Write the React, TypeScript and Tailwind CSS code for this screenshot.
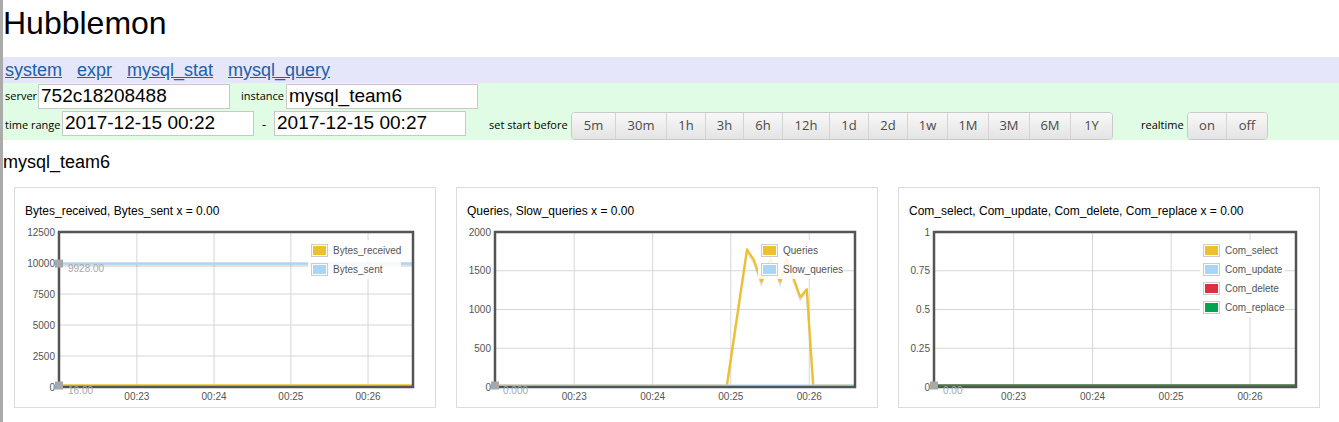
import React from "react";

type Pt = [number, number];
type Series = { name: string; color: string; points: Pt[] };
type Marker = { v: number; label: string; dx: number };

type ChartProps = {
  id: string;
  title: string;
  max: number;
  ticks: string[];
  plotLeft: number;
  plotRight: number;
  legendX: number;
  series: Series[];
  markers: Marker[];
};

const TOP = 14;
const BOTTOM = 169;
const TIMES: [string, number][] = [
  ["00:23", 0.22],
  ["00:24", 0.438],
  ["00:25", 0.655],
  ["00:26", 0.873],
];

const YELLOW = "#f0c02a";
const BLUE = "#a9d6f7";
const RED = "#dc3040";
const GREEN = "#00a64f";

function Chart({ id, title, max, ticks, plotLeft, plotRight, legendX, series, markers }: ChartProps) {
  const w = plotRight - plotLeft;
  const xOf = (f: number) => plotLeft + f * w;
  const yOf = (v: number) => BOTTOM - 1.5 - (v / max) * (BOTTOM - 1.5 - TOP);
  const step = (BOTTOM - TOP) / (ticks.length - 1);
  const line = (pts: Pt[], dy = 0) => pts.map(([f, v]) => `${xOf(f)},${yOf(v) + dy}`).join(" ");

  return (
    <div className="w-[422px] border border-[#dcdcdc] bg-white">
      <div className="pl-[10px] pt-[16px] text-[12px] leading-[14px] text-black">{title}</div>
      <svg width="420" height="189" className="block" fontFamily="'Liberation Sans', Arial, sans-serif">
        <defs>
          <clipPath id={id}>
            <rect x={plotLeft} y={TOP} width={w} height={BOTTOM - TOP} />
          </clipPath>
        </defs>

        {/* grid */}
        {ticks.map((t, i) => {
          const y = TOP + i * step;
          return (
            <g key={t}>
              {i > 0 && i < ticks.length - 1 && (
                <line x1={plotLeft} x2={plotRight} y1={y} y2={y} stroke="#d6d6d6" strokeWidth="1" />
              )}
              <text x={plotLeft - 4} y={y + 3.5} textAnchor="end" fontSize="10" fill="#545454">
                {t}
              </text>
            </g>
          );
        })}
        {TIMES.map(([t, f]) => (
          <g key={t}>
            <line x1={xOf(f)} x2={xOf(f)} y1={TOP} y2={BOTTOM} stroke="#d6d6d6" strokeWidth="1" />
            <text x={xOf(f)} y={182} textAnchor="middle" fontSize="10" fill="#545454">
              {t}
            </text>
          </g>
        ))}

        {/* series */}
        <g clipPath={`url(#${id})`}>
          {series.map((s) => (
            <g key={s.name}>
              <polyline points={line(s.points, 2)} fill="none" stroke="rgba(0,0,0,0.13)" strokeWidth="2.5" />
              <polyline points={line(s.points)} fill="none" stroke={s.color} strokeWidth="2.2" strokeLinejoin="round" />
            </g>
          ))}
        </g>

        {/* border */}
        <rect x={plotLeft} y={TOP} width={w} height={BOTTOM - TOP} fill="none" stroke="#545454" strokeWidth="2.5" />

        {/* markers */}
        {markers.map((m) => (
          <g key={m.label + m.v}>
            <rect x={plotLeft - 4} y={yOf(m.v) - 4} width="8" height="8" fill="#a8a8a8" />
            <text x={plotLeft + m.dx} y={yOf(m.v) + 8} fontSize="10" fill="#a8a8a8">
              {m.label}
            </text>
          </g>
        ))}

        {/* legend */}
        <rect
          x={legendX - 3}
          y={22}
          width={389 - legendX}
          height={series.length * 19 + 1}
          fill="#ffffff"
          fillOpacity="0.85"
        />
        {series.map((s, i) => {
          const cy = 32 + i * 19;
          return (
            <g key={s.name}>
              <rect x={legendX + 0.5} y={cy - 5.5} width="16" height="12" fill="#fff" stroke="#cccccc" />
              <rect x={legendX + 2} y={cy - 4} width="13" height="9" fill={s.color} />
              <text x={legendX + 22} y={cy + 4} fontSize="10" fill="#545454">
                {s.name}
              </text>
            </g>
          );
        })}
      </svg>
    </div>
  );
}

const flat = (v: number): Pt[] => [
  [0, v],
  [1, v],
];

const presets = [
  { label: "5m", w: "w-[43px]" },
  { label: "30m", w: "w-[51px]" },
  { label: "1h", w: "w-[39px]" },
  { label: "3h", w: "w-[38px]" },
  { label: "6h", w: "w-[39px]" },
  { label: "12h", w: "w-[47px]" },
  { label: "1d", w: "w-[39px]" },
  { label: "2d", w: "w-[39px]" },
  { label: "1w", w: "w-[40px]" },
  { label: "1M", w: "w-[41px]" },
  { label: "3M", w: "w-[41px]" },
  { label: "6M", w: "w-[41px]" },
  { label: "1Y", w: "w-[42px]" },
];

const realtime = [
  { label: "on", w: "w-[38px]" },
  { label: "off", w: "w-[41px]" },
];

function ButtonGroup({ items }: { items: { label: string; w: string }[] }) {
  return (
    <div className="mt-[3px] flex h-[28px] overflow-hidden rounded-[4px] border border-[#c9c9c9]">
      {items.map((b) => (
        <button
          key={b.label}
          className={`${b.w} border-l border-[#d4d4d4] bg-gradient-to-b from-[#f8f8f8] to-[#e4e4e4] font-['Open_Sans',sans-serif] text-[13px] text-[#4a4a4a] first:border-l-0`}
        >
          {b.label}
        </button>
      ))}
    </div>
  );
}

const label = "font-['Open_Sans',sans-serif] text-[11px] leading-[16px] text-black";
const field =
  "h-[25px] w-[192px] border border-[#c8c8c8] bg-white pl-[2px] text-[19px] text-black outline-none font-['Liberation_Sans',Arial,sans-serif]";

export default function App() {
  return (
    <div className="flex min-h-screen bg-white font-['Liberation_Sans',Arial,sans-serif] text-black">
      <div className="w-[3px] shrink-0 bg-[#ababab]" />
      <div className="min-w-0 flex-1">
        <h1 className="pt-[5px] text-[32px] leading-[37px]">Hubblemon</h1>

        <nav className="mt-[15px] flex h-[26px] items-center gap-[15px] bg-[#e6e6fa] pl-[2px] text-[18px] leading-[20px]">
          {["system", "expr", "mysql_stat", "mysql_query"].map((l) => (
            <a key={l} href="#" className="text-[#2060a6] underline">
              {l}
            </a>
          ))}
        </nav>

        <div className="h-[57px] bg-[#e0fce4] pl-[2px]">
          <div className="flex h-[26px] items-center">
            <span className={`${label} w-[33px]`}>server</span>
            <input className={field} defaultValue="752c18208488" />
            <span className={`${label} ml-[11px] w-[45px]`}>instance</span>
            <input className={field} defaultValue="mysql_team6" />
          </div>
          <div className="flex h-[31px] items-start">
            <span className={`${label} mt-[8px] w-[57px]`}>time range</span>
            <input className={`${field} mt-[2px]`} defaultValue="2017-12-15 00:22" />
            <span className="mt-[7px] w-[20px] text-center font-['Open_Sans',sans-serif] text-[13px] leading-[16px]">-</span>
            <input className={`${field} mt-[2px]`} defaultValue="2017-12-15 00:27" />
            <span className={`${label} ml-[23px] mt-[8px] w-[82px]`}>set start before</span>
            <ButtonGroup items={presets} />
            <span className={`${label} ml-[28px] mt-[8px] w-[46px]`}>realtime</span>
            <ButtonGroup items={realtime} />
          </div>
        </div>

        <h2 className="mt-[12px] text-[18px] leading-[21px]">mysql_team6</h2>

        <div className="ml-[11px] mt-[14px] flex gap-[20px]">
          <Chart
            id="c1"
            title="Bytes_received, Bytes_sent x = 0.00"
            max={12500}
            ticks={["12500", "10000", "7500", "5000", "2500", "0"]}
            plotLeft={44}
            plotRight={398}
            legendX={296}
            series={[
              { name: "Bytes_received", color: YELLOW, points: flat(16) },
              { name: "Bytes_sent", color: BLUE, points: flat(9928) },
            ]}
            markers={[
              { v: 9928, label: "9928.00", dx: 9 },
              { v: 0, label: "16.00", dx: 9 },
            ]}
          />
          <Chart
            id="c2"
            title="Queries, Slow_queries x = 0.00"
            max={2000}
            ticks={["2000", "1500", "1000", "500", "0"]}
            plotLeft={38}
            plotRight={398}
            legendX={304}
            series={[
              {
                name: "Queries",
                color: YELLOW,
                points: [
                  [0, 0],
                  [0.644, 0],
                  [0.7, 1775],
                  [0.719, 1636],
                  [0.74, 1355],
                  [0.765, 1660],
                  [0.792, 1355],
                  [0.81, 1660],
                  [0.848, 1150],
                  [0.866, 1255],
                  [0.884, 0],
                  [1, 0],
                ],
              },
              { name: "Slow_queries", color: BLUE, points: flat(0) },
            ]}
            markers={[{ v: 0, label: "0.000", dx: 8 }]}
          />
          <Chart
            id="c3"
            title="Com_select, Com_update, Com_delete, Com_replace x = 0.00"
            max={1}
            ticks={["1", "0.75", "0.5", "0.25", "0"]}
            plotLeft={35}
            plotRight={397}
            legendX={304}
            series={[
              { name: "Com_select", color: YELLOW, points: flat(0) },
              { name: "Com_update", color: BLUE, points: flat(0) },
              { name: "Com_delete", color: RED, points: flat(0) },
              { name: "Com_replace", color: GREEN, points: flat(0) },
            ]}
            markers={[{ v: 0, label: "0.00", dx: 9 }]}
          />
        </div>
      </div>
    </div>
  );
}
